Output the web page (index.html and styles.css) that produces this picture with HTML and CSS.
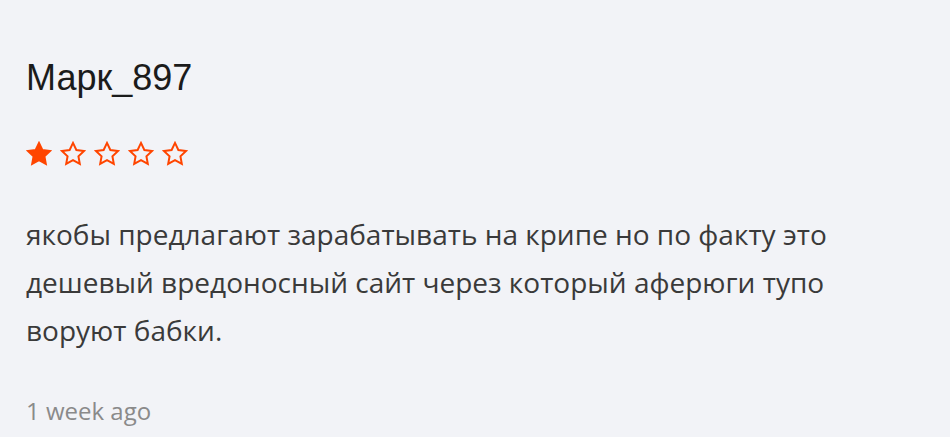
FILE: index.html
```html
<!DOCTYPE html>
<html lang="ru">
<head>
<meta charset="utf-8">
<title>Review</title>
<link rel="stylesheet" href="styles.css">
</head>
<body>
<article class="review">
  <h2 class="author">Марк_897</h2>
  <div class="stars">
    <svg class="star filled" viewBox="0 0 24 24"><polygon points="12,1.8 15.1,8.3 22.2,9.2 17,14.1 18.3,21.2 12,17.7 5.7,21.2 7,14.1 1.8,9.2 8.9,8.3"/></svg>
    <svg class="star" viewBox="0 0 24 24"><polygon points="12,1.8 15.1,8.3 22.2,9.2 17,14.1 18.3,21.2 12,17.7 5.7,21.2 7,14.1 1.8,9.2 8.9,8.3"/></svg>
    <svg class="star" viewBox="0 0 24 24"><polygon points="12,1.8 15.1,8.3 22.2,9.2 17,14.1 18.3,21.2 12,17.7 5.7,21.2 7,14.1 1.8,9.2 8.9,8.3"/></svg>
    <svg class="star" viewBox="0 0 24 24"><polygon points="12,1.8 15.1,8.3 22.2,9.2 17,14.1 18.3,21.2 12,17.7 5.7,21.2 7,14.1 1.8,9.2 8.9,8.3"/></svg>
    <svg class="star" viewBox="0 0 24 24"><polygon points="12,1.8 15.1,8.3 22.2,9.2 17,14.1 18.3,21.2 12,17.7 5.7,21.2 7,14.1 1.8,9.2 8.9,8.3"/></svg>
  </div>
  <p class="text">якобы предлагают зарабатывать на крипе но по факту это дешевый вредоносный сайт через который аферюги тупо воруют бабки.</p>
  <div class="date">1 week ago</div>
</article>
</body>
</html>
```
FILE: styles.css
```css
html, body {
  margin: 0;
  padding: 0;
  background: #f2f3f7;
}
.review {
  padding: 58px 26px 0 26px;
  width: 845px;
}
.author {
  margin: 0;
  font-family: "Liberation Sans", Arial, sans-serif;
  font-weight: 400;
  font-size: 36px;
  line-height: 40px;
  color: #1b1b1b;
}
.stars {
  display: flex;
  gap: 8px;
  margin-top: 43px;
  height: 26px;
}
.star {
  width: 26px;
  height: 26px;
  fill: none;
  stroke: #ff4500;
  stroke-width: 1.8;
  stroke-linejoin: miter;
}
.star.filled {
  fill: #ff4500;
}
.text {
  margin: 43px 0 0 0;
  font-family: "Open Sans", sans-serif;
  font-size: 28px;
  line-height: 48px;
  color: #3a3a3a;
}
.date {
  margin-top: 41px;
  font-family: "Open Sans", sans-serif;
  font-size: 24px;
  line-height: 32px;
  color: #8a8a8a;
}
```
